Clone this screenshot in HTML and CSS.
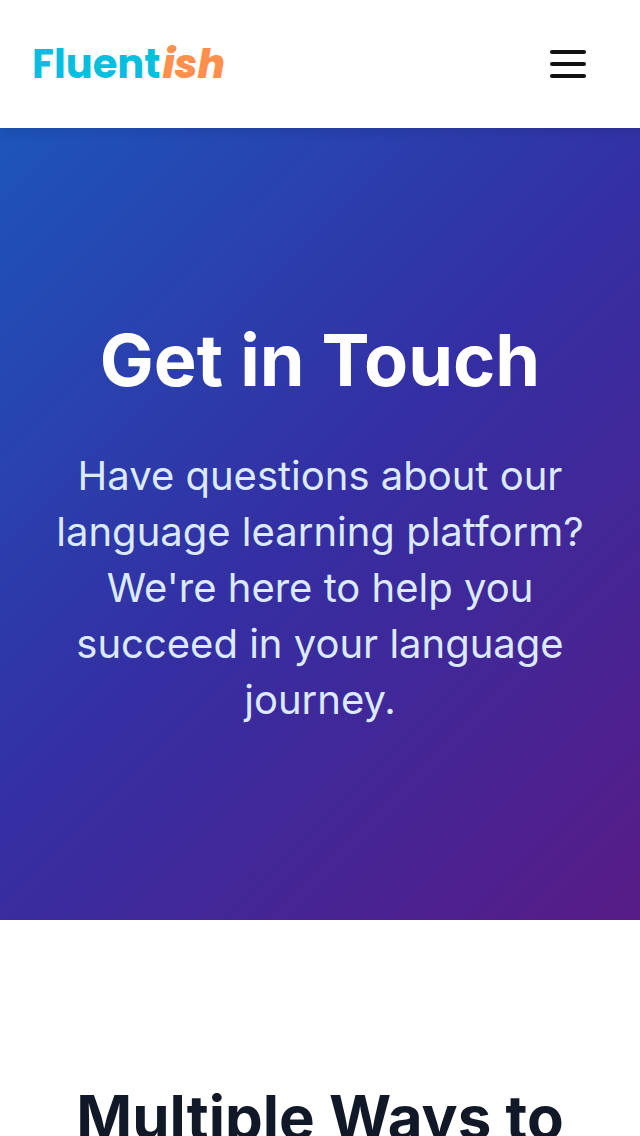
FILE: index.html
```html
<!DOCTYPE html>
<html lang="en">
<head>
    <meta charset="UTF-8">
    <meta name="viewport" content="width=device-width, initial-scale=1.0">
    <title>Contact | Fluentish</title>
    <link rel="stylesheet" href="styles.css">
</head>
<body>
    <header class="navbar">
        <a class="logo" href="#"><span class="logo-main">Fluent</span><span class="logo-accent">ish</span></a>
        <button class="menu-toggle" aria-label="Menu">
            <span></span>
            <span></span>
            <span></span>
        </button>
    </header>

    <section class="hero">
        <h1>Get in Touch</h1>
        <p>Have questions about our language learning platform? We're here to help you succeed in your language journey.</p>
    </section>

    <section class="ways">
        <h2>Multiple Ways to Reach Us</h2>
    </section>
</body>
</html>
```

FILE: styles.css
```css
html, body {
    height: 1136px;
    overflow: hidden;
}
body {
    margin: 0;
    font-family: Inter, sans-serif;
    background-color: white;
}
.navbar {
    position: relative;
    z-index: 10;
    height: 128px;
    padding: 0 48px 0 32px;
    box-sizing: border-box;
    display: flex;
    align-items: center;
    justify-content: space-between;
    background-color: white;
    box-shadow: 0 2px 12px rgba(0,0,0,0.12);
}
.logo {
    font-family: Poppins, "Open Sans", sans-serif;
    font-size: 40px;
    font-weight: 700;
    text-decoration: none;
}
.logo-main {
    color: #06bfdf;
}
.logo-accent {
    color: #ff8f4d;
    font-style: italic;
    font-weight: 800;
    margin-left: 2px;
}
.menu-toggle {
    width: 48px;
    padding: 0 6px;
    background: none;
    border: none;
    display: flex;
    flex-direction: column;
    gap: 8px;
    box-sizing: border-box;
}
.menu-toggle span {
    display: block;
    height: 4px;
    border-radius: 2px;
    background-color: #111;
}
.hero {
    height: 792px;
    box-sizing: border-box;
    padding: 0 48px;
    display: flex;
    flex-direction: column;
    align-items: center;
    justify-content: center;
    text-align: center;
    background: linear-gradient(135deg, #1d55bb 0%, #352ea2 50%, #581c87 100%);
}
.hero h1 {
    margin: 0 0 48px;
    font-size: 72px;
    line-height: 80px;
    font-weight: 700;
    color: white;
}
.hero p {
    margin: 0;
    font-size: 40px;
    line-height: 56px;
    color: #dbeafe;
}
.ways {
    padding: 160px 32px 0;
}
.ways h2 {
    margin: 0;
    font-size: 60px;
    line-height: 75px;
    font-weight: 700;
    text-align: center;
    color: #111827;
}
```
